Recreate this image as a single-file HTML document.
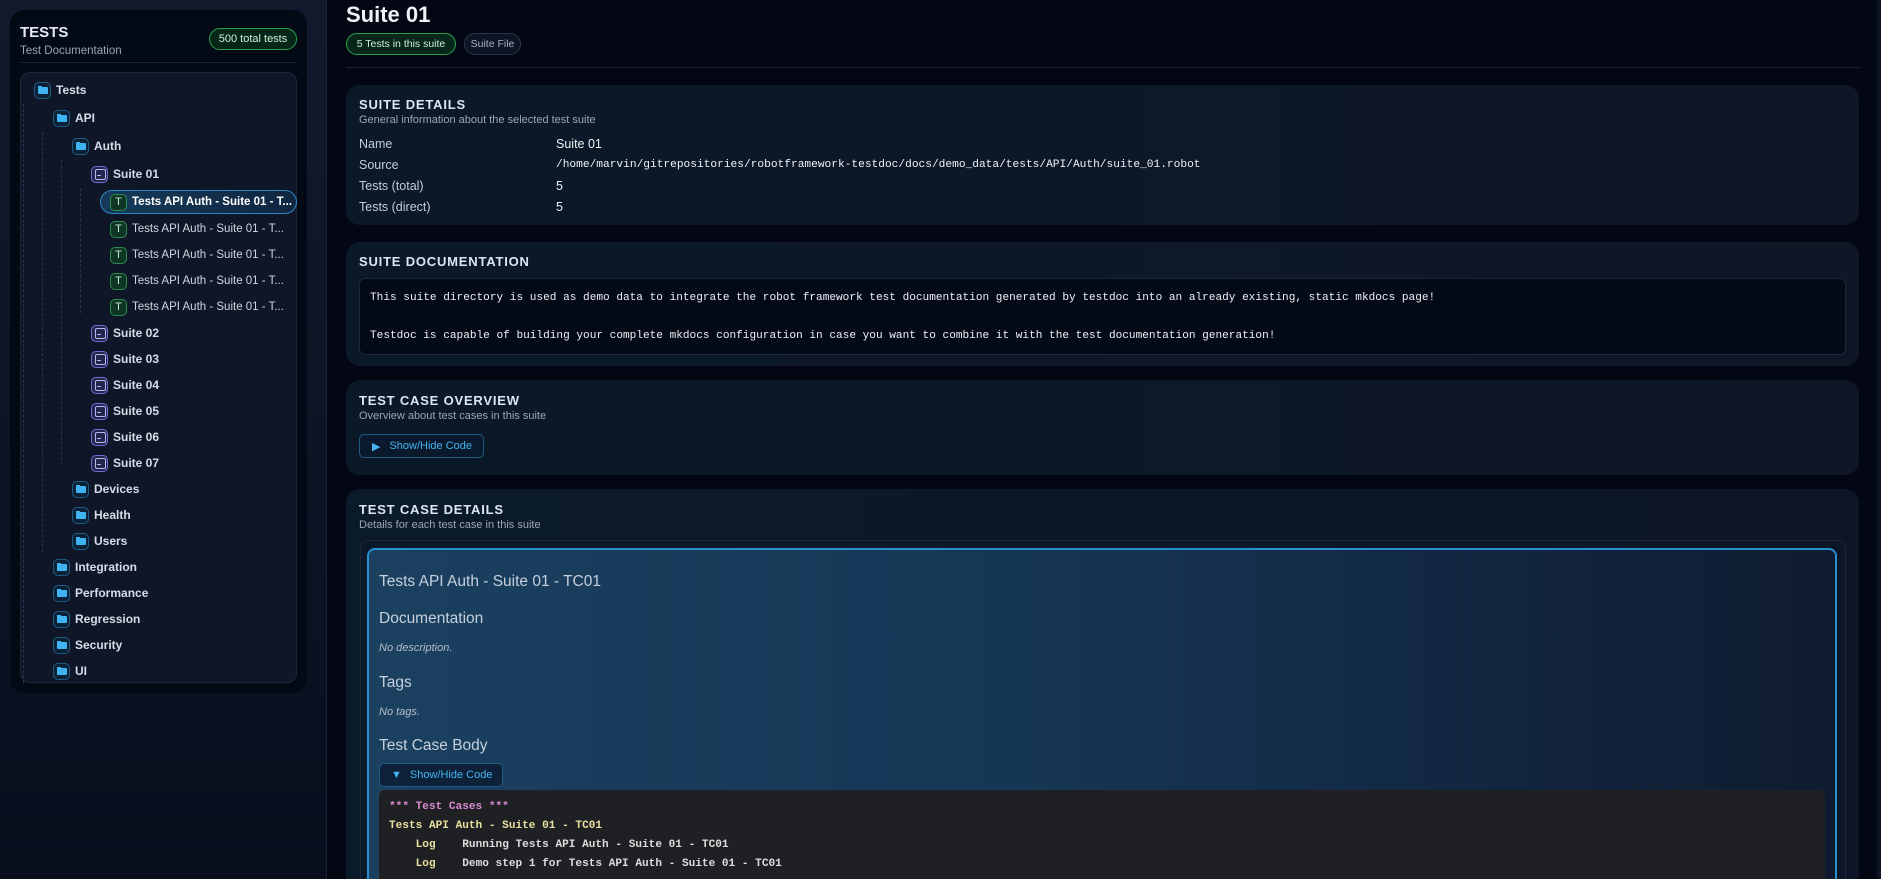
<!DOCTYPE html>
<html><head><meta charset="utf-8"><style>
*{box-sizing:border-box;margin:0;padding:0}
html,body{width:1881px;height:879px;overflow:hidden}
body{background:#030714;font-family:"Liberation Sans",sans-serif;color:#dfe6f0;position:relative}
.side{position:absolute;left:0;top:0;width:327px;height:879px;background:linear-gradient(180deg,#111a2c,#0b1222 70%,#080e1c);border-right:1px solid #1a2234}
.panel{position:absolute;left:10px;top:10px;width:297px;height:683px;background:#040916;border-radius:14px}
.ttl{position:absolute;left:10px;top:14px;font-weight:bold;font-size:15px;color:#e6ebf3}
.sub{position:absolute;left:10px;top:35px;font-size:11.5px;color:#9aa5b5}
.badge{position:absolute;left:199px;top:18px;width:88px;height:22px;border:1px solid #2aa24f;border-radius:11px;background:#07261a;color:#c9f2d3;font-size:11px;text-align:center;line-height:20px}
.hl{position:absolute;left:10px;right:10px;top:52px;border-top:1px solid #1a2234}
.tree{position:absolute;left:10px;top:62px;width:277px;height:611px;background:#0e1627;border:1px solid #1d2739;border-radius:10px}
.row{position:absolute;height:22px;font-size:12px;font-weight:bold;color:#d6dde8;display:flex;align-items:center;white-space:nowrap;overflow:hidden}
.row span{flex-shrink:0}
.fi{width:17px;height:17px;border:1px solid #1f5a85;border-radius:5px;background:#0b2236;margin-right:5px;position:relative}
.fi:after{content:"";position:absolute;left:3px;top:4px;width:10px;height:7px;background:#3fb4f5;border-radius:1px}
.fi:before{content:"";position:absolute;left:3px;top:3px;width:4px;height:2px;background:#3fb4f5}
.si{width:17px;height:17px;border:1.5px solid #6d6ed8;border-radius:5px;background:#23264a;margin-right:5px;position:relative}
.si:after{content:"";position:absolute;left:2.5px;top:2.5px;width:9px;height:9px;border:1px solid #b6b8f5;border-radius:2px}
.si:before{content:"";position:absolute;left:5px;top:8px;width:4px;height:1px;background:#b6b8f5}
.ti{width:17px;height:17px;border:1px solid #2a8a4f;border-radius:5px;background:#0f3524;margin-right:5px;color:#bfe9cc;font-size:11px;font-weight:normal;text-align:center;line-height:15px}
.tr{font-weight:normal;color:#cfd6e0;font-size:11.5px}
.sel{background:linear-gradient(90deg,#163b5b,#0f2640);border:1px solid #2e86c0;border-radius:12px;height:24px;padding-left:9px;color:#fff;font-size:11.5px}
.main{position:absolute;left:346px;top:0;width:1513px;height:879px;overflow:hidden}
h1{position:absolute;left:0;top:2px;font-size:22px;font-weight:bold;color:#eef2f7}
.pill{position:absolute;top:33px;height:22px;border-radius:11px;font-size:10.5px;line-height:20px;text-align:center;white-space:nowrap}
.card{position:absolute;left:0;width:1513px;border-radius:14px;background:linear-gradient(90deg,#0a1828,#0f1727)}
.ch{position:absolute;left:13px;font-size:13px;font-weight:bold;letter-spacing:.8px;color:#dbe6f3}
.cs{position:absolute;left:13px;font-size:11px;color:#9aa6b6}
.kv{position:absolute;font-size:12.5px;color:#c4ccd8}
.mono{font-family:"Liberation Mono",monospace}
.btn{position:absolute;border:1px solid #1f5a85;border-radius:5px;background:#0a1a2c;color:#43b3f0;font-size:11px;display:flex;align-items:center;white-space:nowrap}
</style></head><body>
<div class="side">
 <div class="panel">
  <div class="ttl">TESTS</div><div class="sub">Test Documentation</div>
  <div class="badge">500 total tests</div><div class="hl"></div>
  <div class="tree"></div>
 </div>
 <div style="position:absolute;left:23px;top:104px;height:579px;border-left:1px dashed #2a3548"></div>
 <div style="position:absolute;left:42px;top:132px;height:420px;border-left:1px dashed #2a3548"></div>
 <div style="position:absolute;left:61px;top:160px;height:305px;border-left:1px dashed #2a3548"></div>
 <div style="position:absolute;left:80px;top:188px;height:125px;border-left:1px dashed #2a3548"></div>
 <div class="row" style="left:34px;top:79px"><span class="fi"></span>Tests</div>
 <div class="row" style="left:53px;top:107px"><span class="fi"></span>API</div>
 <div class="row" style="left:72px;top:135px"><span class="fi"></span>Auth</div>
 <div class="row" style="left:91px;top:163px"><span class="si"></span>Suite 01</div>
 <div class="row sel" style="left:100px;top:190px;width:197px"><span class="ti">T</span>Tests API Auth - Suite 01 - T...</div>
 <div class="row tr" style="left:110px;top:218px"><span class="ti">T</span>Tests API Auth - Suite 01 - T...</div>
 <div class="row tr" style="left:110px;top:244px"><span class="ti">T</span>Tests API Auth - Suite 01 - T...</div>
 <div class="row tr" style="left:110px;top:270px"><span class="ti">T</span>Tests API Auth - Suite 01 - T...</div>
 <div class="row tr" style="left:110px;top:296px"><span class="ti">T</span>Tests API Auth - Suite 01 - T...</div>
 <div class="row" style="left:91px;top:322px"><span class="si"></span>Suite 02</div>
 <div class="row" style="left:91px;top:348px"><span class="si"></span>Suite 03</div>
 <div class="row" style="left:91px;top:374px"><span class="si"></span>Suite 04</div>
 <div class="row" style="left:91px;top:400px"><span class="si"></span>Suite 05</div>
 <div class="row" style="left:91px;top:426px"><span class="si"></span>Suite 06</div>
 <div class="row" style="left:91px;top:452px"><span class="si"></span>Suite 07</div>
 <div class="row" style="left:72px;top:478px"><span class="fi"></span>Devices</div>
 <div class="row" style="left:72px;top:504px"><span class="fi"></span>Health</div>
 <div class="row" style="left:72px;top:530px"><span class="fi"></span>Users</div>
 <div class="row" style="left:53px;top:556px"><span class="fi"></span>Integration</div>
 <div class="row" style="left:53px;top:582px"><span class="fi"></span>Performance</div>
 <div class="row" style="left:53px;top:608px"><span class="fi"></span>Regression</div>
 <div class="row" style="left:53px;top:634px"><span class="fi"></span>Security</div>
 <div class="row" style="left:53px;top:660px"><span class="fi"></span>UI</div>
</div>
<div style="position:absolute;left:1877px;top:0;width:4px;height:879px;background:#0c1322"></div>
<div class="main">
 <h1>Suite 01</h1>
 <div class="pill" style="left:0;width:110px;border:1px solid #2aa24f;background:#07261a;color:#c9f2d3">5 Tests in this suite</div>
 <div class="pill" style="left:118px;width:57px;border:1px solid #2c3648;background:#0d1423;color:#a8b2c0">Suite File</div>
 <div style="position:absolute;left:0;right:0;top:67px;border-top:1px solid #1c2536"></div>

 <div class="card" style="top:85px;height:140px">
  <div class="ch" style="top:12px">SUITE DETAILS</div>
  <div class="cs" style="top:29px">General information about the selected test suite</div>
  <div class="kv" style="left:13px;top:52px">Name</div><div class="kv" style="left:210px;top:52px;color:#f0f3f7">Suite 01</div>
  <div class="kv" style="left:13px;top:73px">Source</div><div class="kv mono" style="left:210px;top:74px;font-size:11.2px;color:#f0f3f7">/home/marvin/gitrepositories/robotframework-testdoc/docs/demo_data/tests/API/Auth/suite_01.robot</div>
  <div class="kv" style="left:13px;top:94px">Tests (total)</div><div class="kv" style="left:210px;top:94px;color:#f0f3f7">5</div>
  <div class="kv" style="left:13px;top:115px">Tests (direct)</div><div class="kv" style="left:210px;top:115px;color:#f0f3f7">5</div>
 </div>

 <div class="card" style="top:242px;height:124px">
  <div class="ch" style="top:12px">SUITE DOCUMENTATION</div>
  <div class="mono" style="position:absolute;left:13px;top:36px;width:1487px;height:77px;background:#040916;border:1px solid #1d2739;border-radius:6px;font-size:11.1px;color:#eef2f7;padding:10px 10px;line-height:19px">This suite directory is used as demo data to integrate the robot framework test documentation generated by testdoc into an already existing, static mkdocs page!<br><br>Testdoc is capable of building your complete mkdocs configuration in case you want to combine it with the test documentation generation!</div>
 </div>

 <div class="card" style="top:380px;height:95px">
  <div class="ch" style="top:13px">TEST CASE OVERVIEW</div>
  <div class="cs" style="top:30px">Overview about test cases in this suite</div>
  <div class="btn" style="left:13px;top:54px;width:125px;height:24px;padding-left:12px"><span style="font-size:11px;margin-right:9px">&#9654;</span>Show/Hide Code</div>
 </div>

 <div class="card" style="top:489px;height:400px;background:linear-gradient(90deg,#0b1a2b,#0c1626)">
  <div class="ch" style="top:13px">TEST CASE DETAILS</div>
  <div class="cs" style="top:30px">Details for each test case in this suite</div>
  <div style="position:absolute;left:14px;top:51px;width:1486px;height:360px;border:1px solid #1d2739;border-radius:8px"></div>
  <div style="position:absolute;left:21px;top:59px;width:1470px;height:350px;border:2px solid #2a8fd0;border-radius:8px;background:linear-gradient(90deg,#1b4060,#163655 45%,#0f1b30)">
   <div style="position:absolute;left:10px;top:23px;font-size:15.5px;color:#c6d0dc">Tests API Auth - Suite 01 - TC01</div>
   <div style="position:absolute;left:10px;top:60px;font-size:15.5px;color:#c6d0dc">Documentation</div>
   <div style="position:absolute;left:10px;top:92px;font-size:11px;font-style:italic;color:#b4bfcc">No description.</div>
   <div style="position:absolute;left:10px;top:124px;font-size:15.5px;color:#c6d0dc">Tags</div>
   <div style="position:absolute;left:10px;top:156px;font-size:11px;font-style:italic;color:#b4bfcc">No tags.</div>
   <div style="position:absolute;left:10px;top:187px;font-size:15.5px;color:#c6d0dc">Test Case Body</div>
   <div class="btn" style="left:10px;top:213px;width:124px;height:24px;padding-left:11px;background:#0d2239"><span style="font-size:11px;margin-right:8px">&#9660;</span>Show/Hide Code</div>
   <div class="mono" style="position:absolute;left:10px;top:240px;width:1446px;height:120px;background:#1f2024;border-radius:6px;font-size:11.1px;font-weight:bold;line-height:19px;padding:8px 10px;color:#ddd;white-space:pre"><span style="color:#d98ad0">*** Test Cases ***</span>
<span style="color:#e8e0a0">Tests API Auth - Suite 01 - TC01</span>
    <span style="color:#e8e0a0">Log</span>    Running Tests API Auth - Suite 01 - TC01
    <span style="color:#e8e0a0">Log</span>    Demo step 1 for Tests API Auth - Suite 01 - TC01</div>
  </div>
 </div>
</div>
</body></html>
